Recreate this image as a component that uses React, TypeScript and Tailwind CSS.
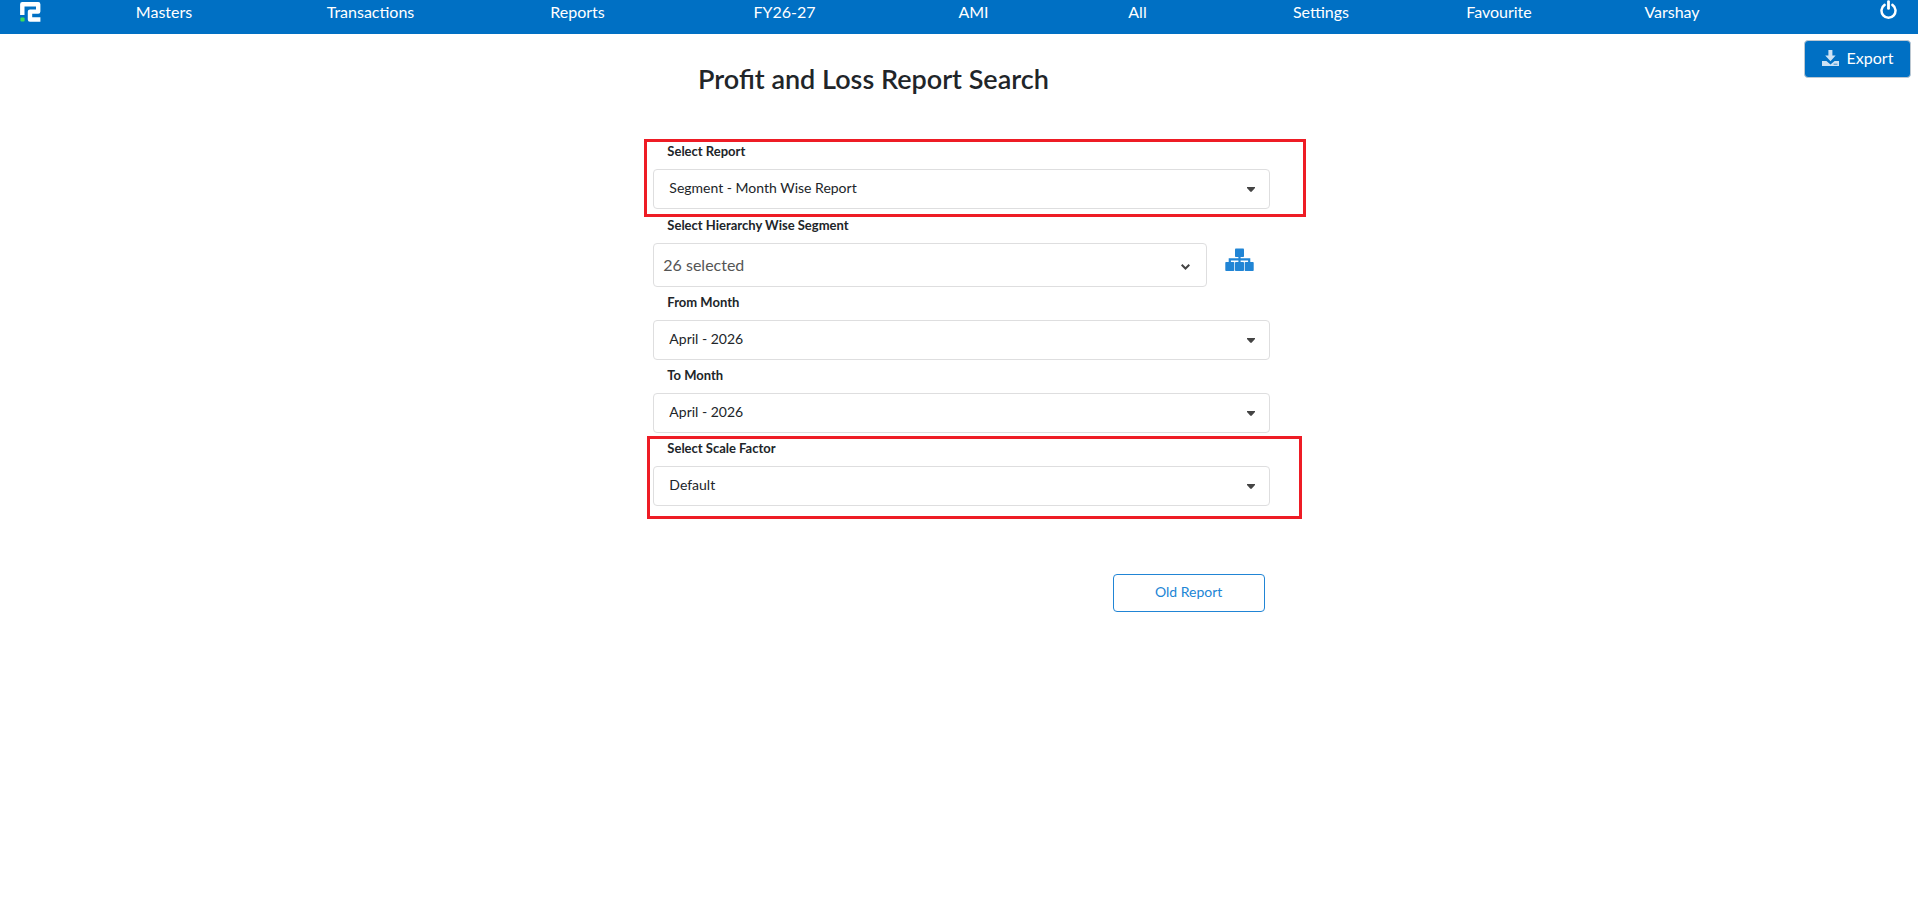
import { useId } from "react";

const menus = ["Masters", "Transactions", "Reports", "FY26-27", "AMI", "All", "Settings", "Favourite", "Varshay"];

function Logo() {
  return (
    <svg viewBox="0 0 21 20" className="h-5 w-[21px]" aria-hidden="true">
      <path
        d="M2.3 13V2.3H18.2V9.6H10V17.5H20.4"
        fill="none"
        stroke="#fff"
        strokeWidth="4.4"
        strokeLinejoin="round"
      />
      <rect x="0.4" y="15.6" width="4.2" height="4" rx="1" fill="#3ddc5a" />
    </svg>
  );
}

function PowerIcon() {
  return (
    <svg viewBox="0 0 17 19" className="h-[19px] w-[17px]" fill="none" stroke="#fff" strokeLinecap="round" aria-hidden="true">
      <path d="M4.6 4.9A7 7 0 1 0 12.4 4.9" strokeWidth="2.5" />
      <path d="M8.5 1.6V8.4" strokeWidth="2.8" />
    </svg>
  );
}

function DownloadIcon() {
  return (
    <svg viewBox="0 0 17 16" className="h-4 w-[17px]" fill="#cce2f4" aria-hidden="true">
      <path d="M6.4 0H10.4V5.5H13.6L8.5 11.2L3.2 5.5H6.4Z" />
      <path d="M0 11H4.4L8.5 14.6L12.6 11H17V16H0ZM11.6 13.8V14.5H15.4V13.8Z" fillRule="evenodd" />
    </svg>
  );
}

function SitemapIcon() {
  return (
    <svg viewBox="0 0 29 24" className="h-6 w-[29px]" fill="#2185d5" aria-hidden="true">
      <rect x="10" y="0.5" width="9" height="8.5" rx="0.8" />
      <rect x="0.3" y="14" width="9" height="9" rx="0.8" />
      <rect x="10" y="14" width="9" height="9" rx="0.8" />
      <rect x="19.7" y="14" width="9" height="9" rx="0.8" />
      <path d="M14.5 8V15M4.8 15V11.4H24.2V15" fill="none" stroke="#2185d5" strokeWidth="2.2" />
    </svg>
  );
}

function FieldLabel({ id, text }: { id: string; text: string }) {
  return (
    <label htmlFor={id} className="block h-[33px] pl-3.5 text-[13px] leading-[30px] font-bold">
      {text}
    </label>
  );
}

function SelectField({ label, value }: { label: string; value: string }) {
  const id = useId();
  return (
    <div>
      <FieldLabel id={id} text={label} />
      <div className="relative">
        <select
          id={id}
          className="block h-10 w-full appearance-none rounded border border-[#dededf] bg-white pr-10 pb-0.5 pl-[15px] text-sm text-[#212529]"
        >
          <option>{value}</option>
        </select>
        <svg viewBox="0 0 8 5" className="pointer-events-none absolute top-[18px] right-[15px] h-[5px] w-2" fill="#444" aria-hidden="true">
          <path d="M0 0H8V1L4.6 4.8H3.4L0 1Z" />
        </svg>
      </div>
    </div>
  );
}

function Highlight({ className }: { className: string }) {
  return <div className={`pointer-events-none absolute border-3 border-[#ee1c25] ${className}`} />;
}

export default function App() {
  const segmentId = useId();
  return (
    <div className="min-h-screen bg-white font-['Lato',sans-serif] text-[#212529]">
      <nav className="grid h-[34px] grid-cols-[61fr_206fr_207fr_207fr_207fr_171fr_157fr_210fr_146fr_200fr_146fr] bg-[#0070c4] text-base text-white">
        <a href="#home" aria-label="Home" className="pt-0.5 pl-5">
          <Logo />
        </a>
        {menus.map((m) => (
          <a key={m} href={`#${m}`} className="text-center leading-6">
            {m}
          </a>
        ))}
        <button type="button" aria-label="Log out" className="flex items-start justify-end pr-[21px]">
          <PowerIcon />
        </button>
      </nav>

      <header className="flex h-[102px] items-start">
        <h1 className="flex-1 pt-[25px] text-center text-[27px] leading-10 font-semibold">Profit and Loss Report Search</h1>
        <div className="flex w-[171px] justify-end pt-1.5 pr-[7px]">
          <button
            type="button"
            className="flex h-[38px] w-[107px] items-center justify-center gap-2 rounded border border-[#bcc8d2] bg-[#0070c4] pb-0.5 text-base text-white"
          >
            <DownloadIcon />
            Export
          </button>
        </div>
      </header>

      <main className="grid grid-cols-12">
        <form className="col-span-4 col-start-5 pr-[9px] pl-3.5">
          <div className="relative pb-px">
            <SelectField label="Select Report" value="Segment - Month Wise Report" />
            <Highlight className="top-[3px] -right-9 -bottom-[7px] -left-[9px]" />
          </div>

          <FieldLabel id={segmentId} text="Select Hierarchy Wise Segment" />
          <div className="flex">
            <div className="relative flex-1">
              <select
                id={segmentId}
                className="block h-11 w-full appearance-none rounded border border-[#dededf] bg-white pr-10 pl-[9px] text-base text-[#555]"
              >
                <option>26 selected</option>
              </select>
              <svg
                viewBox="0 0 9 6"
                className="pointer-events-none absolute top-[21px] right-[17px] h-1.5 w-[9px]"
                fill="none"
                stroke="#444"
                strokeWidth="2"
                aria-hidden="true"
              >
                <path d="M0.7 0.8L4.5 4.5L8.3 0.8" />
              </svg>
            </div>
            <button type="button" aria-label="Open segment hierarchy" className="flex w-[63px] items-start pt-[5px] pl-[18px]">
              <SitemapIcon />
            </button>
          </div>

          <SelectField label="From Month" value="April - 2026" />
          <SelectField label="To Month" value="April - 2026" />

          <div className="relative">
            <SelectField label="Select Scale Factor" value="Default" />
            <Highlight className="top-[3px] -right-8 -bottom-[13px] -left-1.5" />
          </div>

          <div className="flex justify-end pt-17 pr-[5px]">
            <button type="button" className="h-[38px] w-[152px] rounded border border-[#2185d5] bg-white pb-0.5 text-sm text-[#2185d5]">
              Old Report
            </button>
          </div>
        </form>
      </main>
    </div>
  );
}
